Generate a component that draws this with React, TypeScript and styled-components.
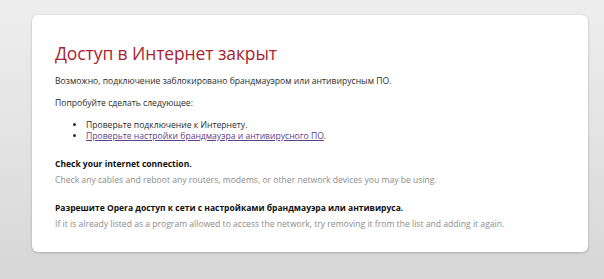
import React from "react";
import styled, { createGlobalStyle } from "styled-components";

const GlobalStyle = createGlobalStyle`
  html, body {
    margin: 0;
    padding: 0;
  }
  body {
    font-family: "Open Sans", "Noto Sans", sans-serif;
  }
`;

const Page = styled.div`
  height: 279px;
  box-sizing: border-box;
  padding: 15px 16px 0 32px;
  background: linear-gradient(180deg, #eeeeee 0%, #e3e3e3 50%, #d7d7d7 100%);
`;

const Card = styled.div`
  width: 556px;
  height: 237px;
  box-sizing: border-box;
  padding: 27px 23px 0 23px;
  background: #ffffff;
  border-radius: 6px;
  box-shadow: 0 1px 3px rgba(0, 0, 0, 0.2), 0 0 1px rgba(0, 0, 0, 0.12);
`;

const Title = styled.h1`
  margin: 0;
  font-size: 17.5px;
  line-height: 23px;
  font-weight: 400;
  color: #a82430;
  letter-spacing: -0.1px;
`;

const Text = styled.p<{ $top: number }>`
  margin: ${(p) => p.$top}px 0 0 0;
  font-size: 8.6px;
  line-height: 11px;
  color: #2b2b2b;
`;

const List = styled.ul`
  margin: 11px 0 0 0;
  padding: 0 0 0 31px;
  font-size: 8.6px;
  line-height: 11px;
  color: #2b2b2b;
`;

const Item = styled.li`
  margin: 0;
`;

const Link = styled.a`
  color: #5e418a;
  text-decoration: underline;
`;

const Heading = styled.h2<{ $top: number }>`
  margin: ${(p) => p.$top}px 0 0 0;
  font-size: 8.5px;
  line-height: 11px;
  font-weight: 700;
  color: #111111;
`;

const Hint = styled.p<{ $top: number }>`
  margin: ${(p) => p.$top}px 0 0 0;
  font-size: 8.6px;
  line-height: 11px;
  color: #8c8c8c;
`;

export default function App() {
  return (
    <>
      <GlobalStyle />
      <Page>
        <Card>
          <Title>Доступ в Интернет закрыт</Title>
          <Text $top={11}>
            Возможно, подключение заблокировано брандмауэром или антивирусным ПО.
          </Text>
          <Text $top={11}>Попробуйте сделать следующее:</Text>
          <List>
            <Item>Проверьте подключение к Интернету.</Item>
            <Item>
              <Link href="#">Проверьте настройки брандмауэра и антивирусного ПО</Link>.
            </Item>
          </List>
          <Heading $top={16}>Check your internet connection.</Heading>
          <Hint $top={6}>
            Check any cables and reboot any routers, modems, or other network devices you may be using.
          </Hint>
          <Heading $top={16}>
            Разрешите Opera доступ к сети с настройками брандмауэра или антивируса.
          </Heading>
          <Hint $top={6}>
            If it is already listed as a program allowed to access the network, try removing it from the list and adding it again.
          </Hint>
        </Card>
      </Page>
    </>
  );
}
